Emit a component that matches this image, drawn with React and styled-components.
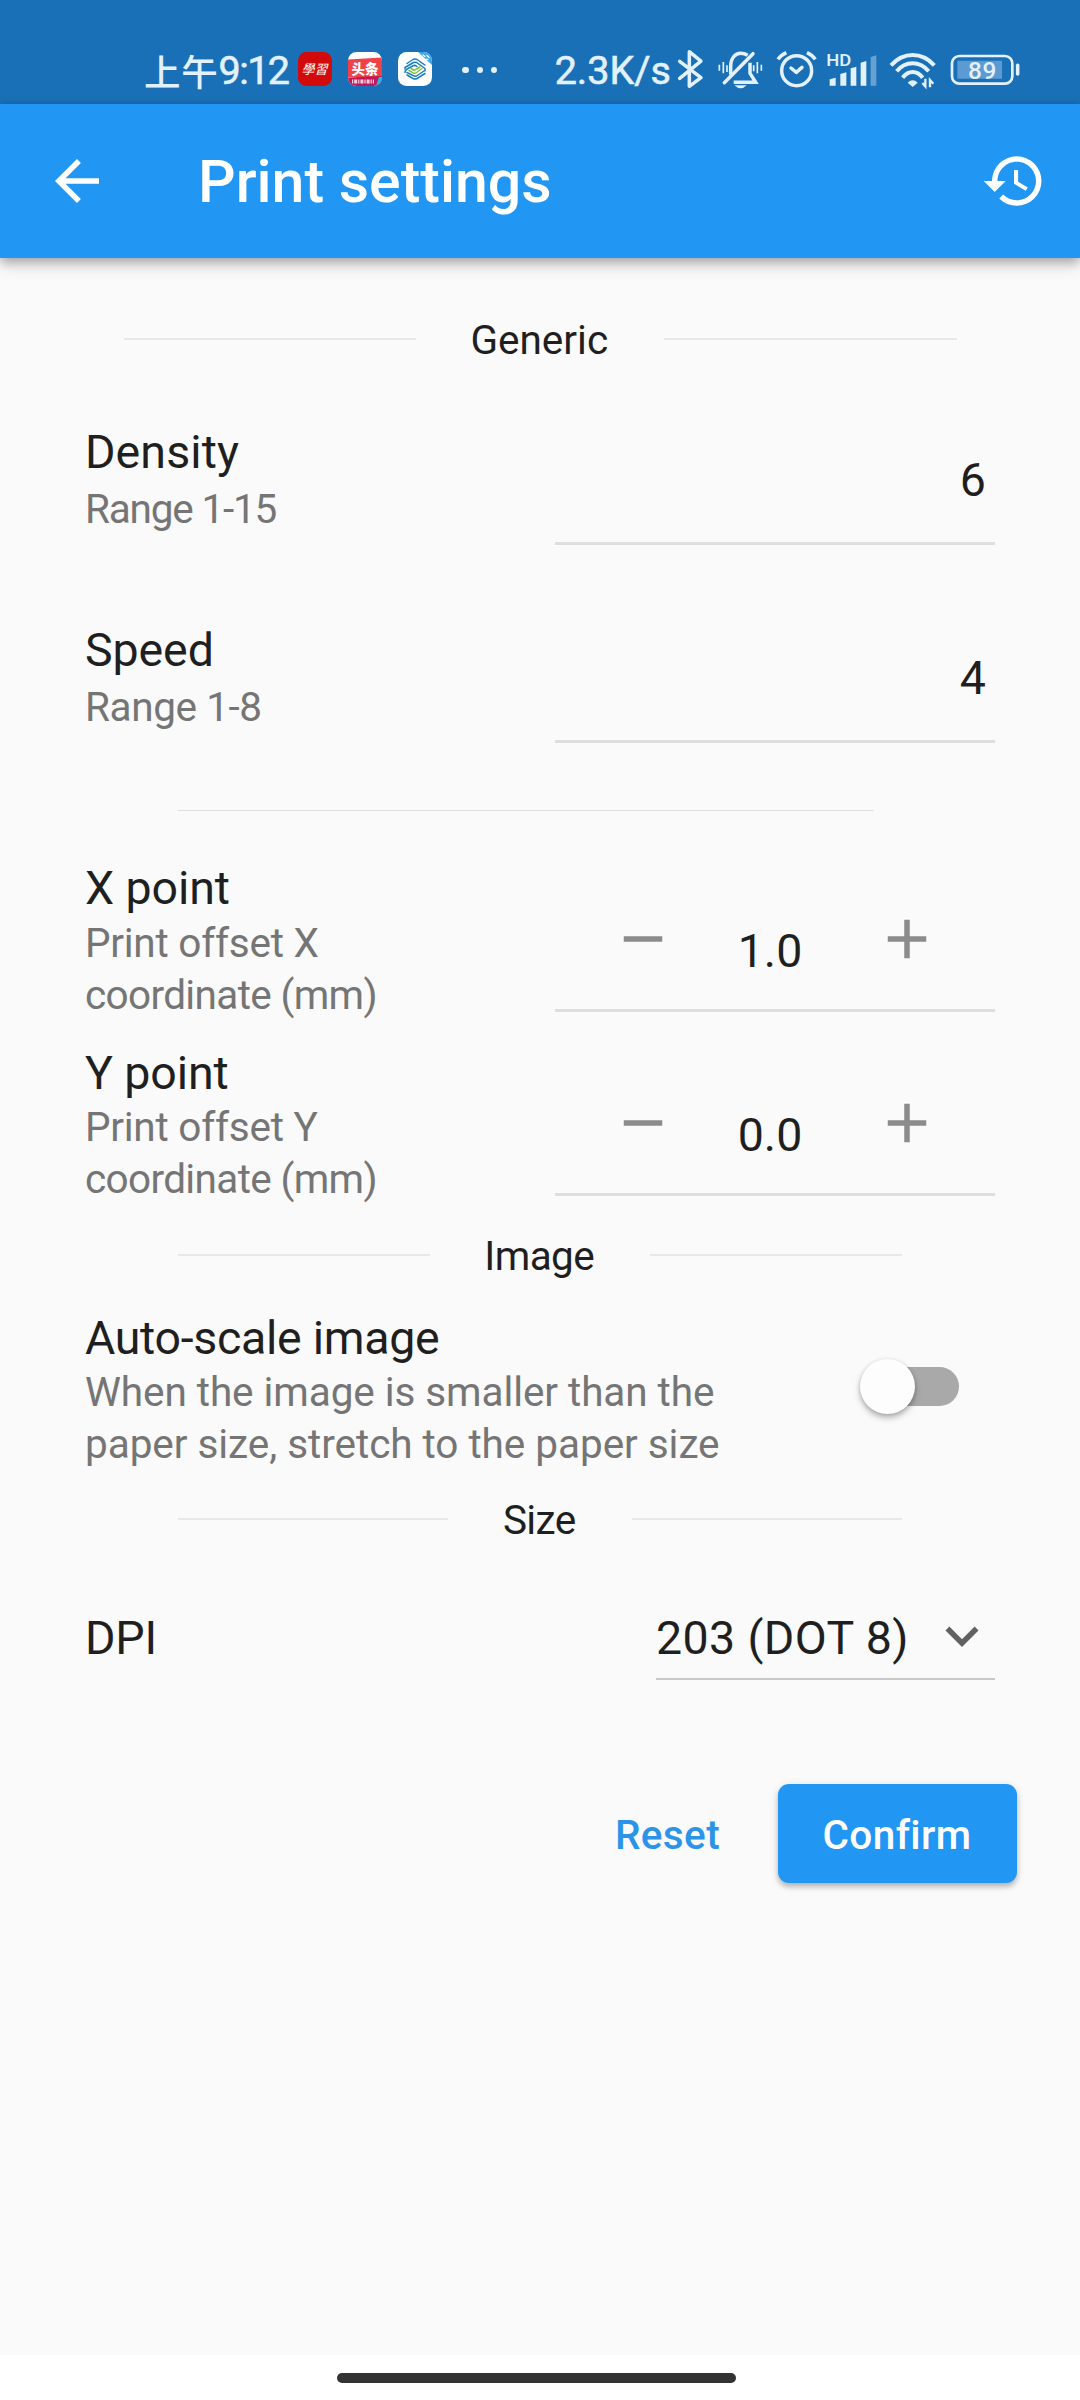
import React from 'react';
import styled, { createGlobalStyle } from 'styled-components';

const GlobalStyle = createGlobalStyle`
  * { box-sizing: border-box; }
  body { margin: 0; background: #fafafa; }
`;

const ICE = '#e3f1fc';

const Screen = styled.div`
  width: 1080px;
  height: 2400px;
  display: flex;
  flex-direction: column;
  overflow: hidden;
  background: #fafafa;
  color: #1f1f1f;
  font-family: Roboto, "Noto Sans CJK SC", sans-serif;
  font-weight: 400;
  font-variant-ligatures: none;
`;

/* ---------- status bar ---------- */

const StatusBar = styled.header`
  flex: none;
  height: 104px;
  padding: 34px 58.7px 0 144px;
  display: flex;
  align-items: center;
  background: #1a70b7;
  color: ${ICE};
`;

const Clock = styled.div`
  display: flex;
  align-items: center;
  width: 154.3px;
  padding-top: 3px;
  font-size: 39.5px;
  line-height: 44px;
  letter-spacing: -1.6px;
  -webkit-text-stroke: 0.6px ${ICE};
  white-space: nowrap;
`;

const Period = styled.span`
  font-family: "Noto Sans CJK SC", sans-serif;
  font-size: 36.5px;
  line-height: 44px;
  letter-spacing: 0.8px;
  font-weight: 500;
  -webkit-text-stroke: 0;
`;

const AppBadge = styled.svg`
  flex: none;
  width: 34px;
  height: 34px;
  margin-right: 15.7px;
`;

const Dots = styled.div`
  display: flex;
  gap: 8px;
  margin: 1.5px 0 0 14.8px;
`;

const Dot = styled.i`
  width: 6.4px;
  height: 6.4px;
  border-radius: 50%;
  background: ${ICE};
`;

const NetSpeed = styled.div`
  margin-left: auto;
  width: 122px;
  padding-top: 3px;
  font-size: 39.5px;
  line-height: 44px;
  letter-spacing: 0;
  -webkit-text-stroke: 0.6px ${ICE};
  white-space: nowrap;
`;

const StatusSvg = styled.svg`
  flex: none;
  display: block;
  width: ${(p) => p.$w}px;
  height: 41.7px;
  margin-left: ${(p) => p.$gap || 0}px;
  fill: none;
  stroke: ${ICE};
  stroke-width: 10.5;
`;

/* ---------- app bar ---------- */

const AppBar = styled.div`
  flex: none;
  height: 153.5px;
  padding: 0 33px 0 44px;
  display: flex;
  align-items: center;
  background: #2196f3;
  color: #fff;
  box-shadow: 0 3px 10px rgba(0, 0, 0, 0.28), 0 9px 14px rgba(0, 0, 0, 0.12);
`;

const BarIcon = styled.svg`
  flex: none;
  width: 66px;
  height: 66px;
  fill: #fff;
`;

const Title = styled.h1`
  flex: 1;
  margin: 2px 0 0 88px;
  font-size: 59px;
  line-height: 72px;
  font-weight: 500;
  letter-spacing: 0;
`;

/* ---------- form ---------- */

const Form = styled.main`
  flex: 1;
  display: flex;
  flex-direction: column;
  padding-top: 42.5px;
`;

const Spacer = styled.div`
  flex: none;
  height: ${(p) => p.$h}px;
`;

const Section = styled.div`
  flex: none;
  height: ${(p) => p.$h}px;
  padding: 0 ${(p) => p.$inset}px;
  display: flex;
  align-items: center;
`;

const Rule = styled.span`
  flex: 1;
  height: 2px;
  background: #e8e8e8;
`;

const SectionName = styled.h2`
  margin: ${(p) => p.$drop}px 56px 0 54.5px;
  font-size: 40.5px;
  line-height: 52px;
  font-weight: 400;
  letter-spacing: ${(p) => p.$ls || 0}px;
`;

const Separator = styled.hr`
  flex: none;
  width: 696px;
  height: 1px;
  margin: 14px 0 39px 178px;
  border: 0;
  background: #dedede;
`;

const Row = styled.div`
  flex: none;
  height: ${(p) => p.$h}px;
  padding: ${(p) => p.$top}px 85px 0 85px;
  display: flex;
  justify-content: space-between;
  align-items: flex-start;
`;

const Labels = styled.div`
  display: flex;
  flex-direction: column;
  gap: ${(p) => p.$gap || 0}px;
  padding-top: ${(p) => p.$drop || 0}px;
`;

const Label = styled.div`
  font-size: 46.5px;
  line-height: 56px;
  letter-spacing: ${(p) => p.$ls || 0}px;
  white-space: nowrap;
`;

const Hint = styled.div`
  font-size: 40.5px;
  line-height: 52px;
  color: #757575;
`;

const HintLine = styled.span`
  display: block;
  white-space: nowrap;
  letter-spacing: ${(p) => p.$ls || 0}px;
`;

const Field = styled.div`
  width: 440px;
  height: ${(p) => p.$h}px;
  display: flex;
  justify-content: flex-end;
  align-items: flex-start;
  border-bottom: 3px solid #dedede;
  font-size: 46.5px;
  line-height: 56px;
`;

const FieldValue = styled.span`
  margin: 28px 9px 0 0;
`;

const StepBody = styled.div`
  width: 100%;
  padding: 46px 55px 0;
  display: flex;
`;

const StepIcon = styled.svg`
  flex: none;
  width: 66px;
  height: 66px;
  fill: #8b8b8b;
`;

const StepValue = styled.span`
  flex: 1;
  margin: 17px 10px 0 0;
  text-align: center;
`;

const Switch = styled.button`
  display: flex;
  align-items: center;
  width: 91px;
  height: 39px;
  margin: 58px 36px 0 0;
  padding: 0;
  border: 0;
  border-radius: 20px;
  background: #a9a9a9;
`;

const Thumb = styled.span`
  flex: none;
  width: 55px;
  height: 55px;
  margin-left: -8px;
  border-radius: 50%;
  background: #fdfdfd;
  box-shadow: 0 4px 6px rgba(0, 0, 0, 0.25), 0 1px 4px rgba(0, 0, 0, 0.15);
`;

const Select = styled.div`
  display: flex;
  align-items: flex-start;
  width: 339px;
  height: 70px;
  border-bottom: 2px solid #c8c8c8;
  font-size: 46.5px;
  line-height: 56px;
  letter-spacing: 0.4px;
  white-space: nowrap;
`;

const SelectText = styled.span`
  flex: 1;
`;

const Chevron = styled.svg`
  flex: none;
  width: 66px;
  height: 66px;
  margin-top: -7px;
  fill: #616161;
`;

const Actions = styled.div`
  flex: none;
  display: flex;
  justify-content: flex-end;
  align-items: center;
  padding: 83px 63.5px 0 0;
`;

const Button = styled.button`
  height: 99px;
  width: ${(p) => (p.$filled ? 239 : 210)}px;
  margin-left: ${(p) => (p.$filled ? 5 : 0)}px;
  padding: 2px 0 0;
  border: 0;
  border-radius: 11px;
  background: ${(p) => (p.$filled ? '#2196f3' : 'transparent')};
  color: ${(p) => (p.$filled ? '#fff' : '#2b94e8')};
  box-shadow: ${(p) =>
    p.$filled
      ? '0 4px 5px rgba(0,0,0,0.2), 0 2px 10px rgba(0,0,0,0.12)'
      : 'none'};
  font: 500 40.5px/52px Roboto, sans-serif;
  font-variant-ligatures: none;
  letter-spacing: 0.4px;
`;

const NavBar = styled.footer`
  flex: none;
  height: 45px;
  display: flex;
  justify-content: center;
  padding: 18px 7px 0 0;
  background: #fff;
`;

const Handle = styled.span`
  width: 399px;
  height: 10px;
  border-radius: 5px;
  background: #333;
`;

/* ---------- pieces ---------- */

const StudyBadge = () => (
  <AppBadge viewBox="0 0 34 34">
    <rect width="34" height="34" rx="8.5" fill="#d20a0c" />
    <text x="17" y="22.5" textAnchor="middle" fontSize="13" fontWeight="400"
      fontFamily="'Noto Sans CJK SC', sans-serif" fill="#fff" transform="skewX(-14) translate(5 0)">學習</text>
  </AppBadge>
);

const NewsBadge = () => (
  <AppBadge viewBox="0 0 34 34">
    <clipPath id="news"><rect width="34" height="34" rx="8.5" /></clipPath>
    <g clipPath="url(#news)">
      <rect width="34" height="34" fill="#fff" />
      <path d="M0 7.5L34 5.5V25H0z" fill="#ef4146" />
      <path d="M0 25.5L34 24V34H0z" fill="#c2185b" />
      <path d="M31 25h3v9h-6z" fill="#27b7e8" />
      <path d="M4 29.5h22" stroke="#fbd0dc" strokeWidth="4" strokeDasharray="1.2 1 3 1" />
      <text x="17" y="21.5" textAnchor="middle" fontSize="13.5" fontWeight="900"
        fontFamily="'Noto Sans CJK SC', sans-serif" fill="#fff">头条</text>
    </g>
  </AppBadge>
);

const CarrierBadge = () => (
  <AppBadge viewBox="0 0 34 34">
    <clipPath id="carrier"><rect width="34" height="34" rx="8.5" /></clipPath>
    <g clipPath="url(#carrier)" fill="none" strokeLinecap="round" strokeLinejoin="round">
      <rect width="34" height="34" fill="#fff" />
      <path d="M20 0h14v13z" fill="#3fa9e8" />
      <path d="M25 3l2 1.5M29 3.5l2 2M28 7l2 .5" stroke="#fff" strokeWidth="1.2" />
      <g strokeWidth="1.5" stroke="#1b7fc4">
        <path d="M9 11.5L15 7.500Q17 6.500 19 7.500L27 13" />
        <path d="M7 17V15.500L15.500 10.500Q17 9.800 18.500 10.500L27 16.500V19" />
        <path d="M7 20.500Q7 18 10 16.500L15.500 13.500Q17 13 19 14.500" />
        <path d="M27 21.500L19 26.500Q17 27.500 15 26.500L9 23" />
        <path d="M26 19L18.500 24Q17 24.500 15 23.500L9 20.500" />
      </g>
      <g strokeWidth="1.5" stroke="#7fc241">
        <path d="M11 18.500L15 20.800Q17 21.800 18.500 20.500L24 16.500" />
        <path d="M13 16.500L15.500 18Q17 18.500 18.500 17L22 15" />
      </g>
    </g>
  </AppBadge>
);

const StatusIcons = () => (
  <>
    <StatusSvg $w={27.3} viewBox="410 40 82 125">
      <path d="M418 80L482 129L447 155V51L482 79L418 131" strokeLinejoin="round" strokeLinecap="round" />
    </StatusSvg>
    <StatusSvg $w={46.7} $gap={12.7} viewBox="530 40 140 125">
      <path d="M571 120V96C571 70 585 56 601 56Q612 56 622 62" />
      <path d="M552 144L638 57" strokeLinecap="round" />
      <path d="M629 84V116L646 143H580" />
      <path d="M582 152H619Q601 170 582 152Z" fill={ICE} stroke="none" />
      <path d="M537 90V108M549 82V116M560 92V112M640 92V110M651 82V116M663 90V108" strokeWidth="5" />
    </StatusSvg>
    <StatusSvg $w={43.3} $gap={11.7} viewBox="705 40 130 125">
      <circle cx="770" cy="108" r="45" />
      <path d="M714 74Q722 62 739 54M801 54Q818 62 826 74" />
      <path d="M753 100L769 113L786 98" strokeLinejoin="round" strokeLinecap="round" />
    </StatusSvg>
    <StatusSvg $w={52} $gap={7.7} viewBox="858 40 156 125">
      <g fill={ICE} stroke="none">
        <text x="859" y="94" fontSize="49" fontWeight="500" fontFamily="Roboto, sans-serif"
          textLength="75" lengthAdjust="spacingAndGlyphs">HD</text>
        <path d="M869 134l18-5v24h-18zM901 118l18-5v40h-18zM932 101l17-5v57h-17zM962 84l17-5v74h-17z" />
        <path d="M992 67l17-5v91h-17z" opacity="0.38" />
      </g>
    </StatusSvg>
    <StatusSvg $w={49} $gap={10.3} viewBox="1045 40 147 125">
      <path d="M1054 92Q1082 61 1119 61T1184 92M1071 110Q1091 86 1119 86T1167 110M1089 129Q1102 112 1119 112T1149 129" strokeWidth="12" />
      <path d="M1104 144Q1119 130 1134 144L1119 157Z" fill={ICE} stroke="none" />
      <path d="M1157 132V155L1148 145M1171 158V136L1181 147" strokeWidth="7" />
    </StatusSvg>
    <StatusSvg $w={72} $gap={12} viewBox="1228 40 216 125">
      <rect x="1237" y="64" width="181" height="83" rx="22" strokeWidth="8" />
      <path d="M1253 78h134v54h-134z" fill="#5b9ad2" stroke="none" />
      <path d="M1434 92V118" strokeLinecap="round" />
      <text x="1285" y="132" fontSize="73" fontWeight="500" fontFamily="Roboto, sans-serif"
        fill={ICE} stroke="none" textLength="85">89</text>
    </StatusSvg>
  </>
);

const TitledRule = ({ name, h, inset, ls, drop = 3 }) => (
  <Section $h={h} $inset={inset}>
    <Rule />
    <SectionName $ls={ls} $drop={drop}>{name}</SectionName>
    <Rule />
  </Section>
);

const NumberRow = ({ label, hint, value, ls, hintLs }) => (
  <Row $h={198} $top={24}>
    <Labels $gap={3}>
      <Label $ls={ls}>{label}</Label>
      <Hint><HintLine $ls={hintLs}>{hint}</HintLine></Hint>
    </Labels>
    <Field $h={121}>
      <FieldValue>{value}</FieldValue>
    </Field>
  </Row>
);

const StepRow = ({ axis, value }) => (
  <Row $h={184.3} $top={10}>
    <Labels $drop={0.4} $gap={0.6}>
      <Label $ls={-0.1}>{axis} point</Label>
      <Hint>
        <HintLine $ls={-0.25}>Print offset {axis}</HintLine>
        <HintLine $ls={-0.65}>coordinate (mm)</HintLine>
      </Hint>
    </Labels>
    <Field $h={152}>
      <StepBody>
        <StepIcon viewBox="0 0 24 24"><path d="M19 13H5v-2h14z" /></StepIcon>
        <StepValue>{value}</StepValue>
        <StepIcon viewBox="0 0 24 24"><path d="M19 13h-6v6h-2v-6H5v-2h6V5h2v6h6z" /></StepIcon>
      </StepBody>
    </Field>
  </Row>
);

export default function App() {
  return (
    <Screen>
      <GlobalStyle />
      <StatusBar>
        <Clock><Period>上午</Period>9:12</Clock>
        <StudyBadge />
        <NewsBadge />
        <CarrierBadge />
        <Dots><Dot /><Dot /><Dot /></Dots>
        <NetSpeed>2.3K/s</NetSpeed>
        <StatusIcons />
      </StatusBar>

      <AppBar>
        <BarIcon viewBox="0 0 24 24">
          <path d="M20 11H7.830l5.590-5.590L12 4l-8 8 8 8 1.410-1.410L7.830 13H20z" />
        </BarIcon>
        <Title>Print settings</Title>
        <BarIcon viewBox="0 0 24 24">
          <path d="M13 3a9 9 0 0 0-9 9H1l3.890 3.890.07.14L9 12H6c0-3.870 3.130-7 7-7s7 3.130 7 7-3.130 7-7 7c-1.930 0-3.680-.79-4.940-2.060l-1.420 1.420A8.954 8.954 0 0 0 13 21a9 9 0 0 0 0-18zm-1 5v5l4.280 2.540.72-1.210-3.500-2.080V8z" />
        </BarIcon>
      </AppBar>

      <Form>
        <TitledRule name="Generic" h={78} inset={123.5} ls={0} drop={1} />
        <Spacer $h={22} />
        <NumberRow label="Density" hint="Range 1-15" value="6" ls={0.1} hintLs={-1.2} />
        <NumberRow label="Speed" hint="Range 1-8" value="4" ls={-0.1} hintLs={-0.4} />
        <Separator />
        <StepRow axis="X" value="1.0" />
        <StepRow axis="Y" value="0.0" />
        <TitledRule name="Image" h={72} inset={178} ls={-0.6} />
        <Row $h={192} $top={18.5}>
          <Labels $drop={0.5}>
            <Label $ls={-0.3}>Auto-scale image</Label>
            <Hint>
              <HintLine $ls={-0.08}>When the image is smaller than the</HintLine>
              <HintLine $ls={-0.05}>paper size, stretch to the paper size</HintLine>
            </Hint>
          </Labels>
          <Switch><Thumb /></Switch>
        </Row>
        <TitledRule name="Size" h={72} inset={178} ls={-0.6} />
        <Row $h={146.5} $top={55.5}>
          <Label $ls={-0.2}>DPI</Label>
          <Select>
            <SelectText>203 (DOT 8)</SelectText>
            <Chevron viewBox="0 0 24 24"><path d="M16.590 8.590L12 13.170 7.410 8.590 6 10l6 6 6-6z" /></Chevron>
          </Select>
        </Row>
        <Actions>
          <Button>Reset</Button>
          <Button $filled>Confirm</Button>
        </Actions>
      </Form>

      <NavBar><Handle /></NavBar>
    </Screen>
  );
}
